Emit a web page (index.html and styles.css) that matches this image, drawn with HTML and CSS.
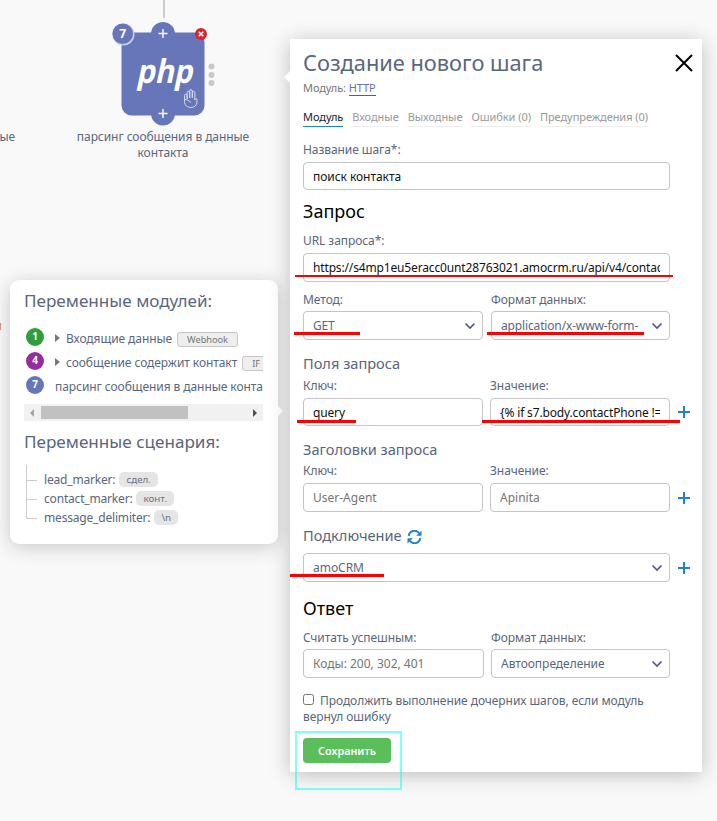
FILE: index.html
```html
<!DOCTYPE html>
<html lang="ru">
<head>
    <meta charset="UTF-8">
    <meta name="viewport" content="width=device-width, initial-scale=1.0">
    <title>Создание нового шага</title>
    <link rel="stylesheet" href="styles.css">
</head>
<body>
    <div class="canvas">
        <div class="connector"></div>
        <div class="edge-label edge-top">ые</div>
        <div class="edge-label edge-mid">и</div>

        <div class="node">
            <svg class="node-icon" width="120" height="110" viewBox="0 0 120 110">
                <g fill="#6775b9">
                    <rect x="19.5" y="12.5" width="83" height="83" rx="10"/>
                    <circle cx="61" cy="14" r="12"/>
                    <circle cx="61" cy="93.500" r="12"/>
                </g>
                <path d="M61 9v9M56.500 13.500h9M61 89v9M56.500 93.500h9" stroke="#fff" stroke-width="1.400"/>
                <circle cx="21.500" cy="14.500" r="11" fill="#c9cde5"/>
                <circle cx="20.700" cy="13.700" r="10.300" fill="#6775b9"/>
                <text class="node-num" x="20.700" y="18" text-anchor="middle">7</text>
                <text class="node-php" transform="translate(62 63) skewX(-12)" text-anchor="middle" textLength="56" lengthAdjust="spacingAndGlyphs">php</text>
                <circle cx="99" cy="14" r="6" fill="#d8232f"/>
                <path d="M96.700 11.700l4.600 4.600M101.300 11.700l-4.600 4.600" stroke="#fff" stroke-width="1.600"/>
                <g fill="#c9c9c9">
                    <circle cx="109.500" cy="46.500" r="3"/>
                    <circle cx="109.500" cy="55" r="3"/>
                    <circle cx="109.500" cy="63" r="3"/>
                </g>
                <path d="M82.500 80v-4.500a1.300 1.300 0 0 1 2.600 0V79v-6.500a1.300 1.300 0 0 1 2.600 0V78v-7a1.300 1.300 0 0 1 2.600 0v7-5.500a1.300 1.300 0 0 1 2.600 0V80c.5-1.500 1.600-2 2-1v3c0 3.500-2.500 5.500-5.800 5.500-3.600 0-6.600-2-6.600-6zM83 79.500c2 0 3.500 1 6 3" fill="none" stroke="#d5d9ee" stroke-width="1"/>
            </svg>
            <div class="node-title">парсинг сообщения в данные контакта</div>
        </div>

        <div class="vars">
            <h3>Переменные модулей:</h3>
            <div class="modules">
                <div class="module"><span class="num green">1</span><i class="tri"></i><span>Входящие данные</span><span class="tag">Webhook</span></div>
                <div class="module"><span class="num purple">4</span><i class="tri"></i><span>сообщение содержит контакт</span><span class="tag">IF</span></div>
                <div class="module"><span class="num blue">7</span><span>парсинг сообщения в данные конта</span></div>
            </div>
            <div class="scrollbar">
                <i class="arrow-left"></i>
                <div class="track"><div class="thumb"></div></div>
                <i class="arrow-right"></i>
            </div>
            <h3>Переменные сценария:</h3>
            <ul class="tree">
                <li>lead_marker: <span class="pill">сдел.</span></li>
                <li>contact_marker: <span class="pill">конт.</span></li>
                <li>message_delimiter: <span class="pill">\n</span></li>
            </ul>
        </div>

        <div class="modal">
            <div class="modal-head">
                <h2>Создание нового шага</h2>
                <svg class="close" width="18" height="18" viewBox="0 0 18 18"><path d="M1 1l16 16M17 1L1 17" stroke="#000" stroke-width="2"/></svg>
            </div>
            <div class="module-type">Модуль: <a>HTTP</a></div>
            <div class="tabs">
                <a class="active">Модуль</a>
                <a>Входные</a>
                <a>Выходные</a>
                <a>Ошибки (0)</a>
                <a>Предупреждения (0)</a>
            </div>

            <div class="group name-group">
                <label>Название шага*:</label>
                <input class="low" type="text" value="поиск контакта">
            </div>

            <h4>Запрос</h4>
            <div class="group url-group">
                <label>URL запроса*:</label>
                <input type="text" value="https://s4mp1eu5eracc0unt28763021.amocrm.ru/api/v4/contacts">
            </div>
            <div class="row method-row">
                <div class="group">
                    <label>Метод:</label>
                    <div class="select"><span>GET</span><svg width="12" height="8" viewBox="0 0 12 8"><path d="M1.500 1.500L6 6l4.500-4.500"/></svg></div>
                </div>
                <div class="group">
                    <label>Формат данных:</label>
                    <div class="select"><span>application/x-www-form-</span><svg width="12" height="8" viewBox="0 0 12 8"><path d="M1.500 1.500L6 6l4.500-4.500"/></svg></div>
                </div>
            </div>

            <h5>Поля запроса</h5>
            <div class="row pair-row fields-row">
                <div class="group">
                    <label>Ключ:</label>
                    <input class="low" type="text" value="query">
                </div>
                <div class="group">
                    <label>Значение:</label>
                    <input class="low" type="text" value="{% if s7.body.contactPhone != ''">
                </div>
                <svg class="plus" width="12" height="12" viewBox="0 0 12 12"><path d="M6 0v12M0 6h12"/></svg>
            </div>

            <h5>Заголовки запроса</h5>
            <div class="row pair-row">
                <div class="group">
                    <label>Ключ:</label>
                    <input type="text" placeholder="User-Agent">
                </div>
                <div class="group">
                    <label>Значение:</label>
                    <input type="text" placeholder="Apinita">
                </div>
                <svg class="plus" width="12" height="12" viewBox="0 0 12 12"><path d="M6 0v12M0 6h12"/></svg>
            </div>

            <h5>Подключение
                <svg class="refresh" width="15" height="14" viewBox="0 0 15 14">
                    <path d="M1.800 5.800A5.600 5.600 0 0 1 12 3.300M13.200 8.200A5.600 5.600 0 0 1 3 10.700" fill="none" stroke="#1c84cf" stroke-width="2"/>
                    <path d="M14.500.5v5.300H9.200zM.5 13.500V8.200h5.300z" fill="#1c84cf"/>
                </svg>
            </h5>
            <div class="row connect-row">
                <div class="select"><span>amoCRM</span><svg width="12" height="8" viewBox="0 0 12 8"><path d="M1.500 1.500L6 6l4.500-4.500"/></svg></div>
                <svg class="plus" width="12" height="12" viewBox="0 0 12 12"><path d="M6 0v12M0 6h12"/></svg>
            </div>

            <h4>Ответ</h4>
            <div class="row answer-row">
                <div class="group">
                    <label>Считать успешным:</label>
                    <input type="text" placeholder="Коды: 200, 302, 401">
                </div>
                <div class="group">
                    <label>Формат данных:</label>
                    <div class="select"><span>Автоопределение</span><svg width="12" height="8" viewBox="0 0 12 8"><path d="M1.500 1.500L6 6l4.500-4.500"/></svg></div>
                </div>
            </div>
            <label class="check"><input type="checkbox">Продолжить выполнение дочерних шагов, если модуль вернул ошибку</label>
            <button class="save">Сохранить</button>
        </div>

        <!-- пометки поверх формы -->
        <div class="mark mark-url"></div>
        <div class="mark mark-method"></div>
        <div class="mark mark-format"></div>
        <div class="mark mark-key"></div>
        <div class="mark mark-value"></div>
        <div class="mark mark-connect"></div>
        <div class="frame"></div>
    </div>
</body>
</html>
```
FILE: styles.css
```css
* { box-sizing: border-box; }
body { margin: 0; background: #f9f9f9; font-family: "Noto Sans", "Open Sans", sans-serif; font-size: 12px; line-height: 16px; letter-spacing: -0.07px; color: #596680; }
h2, h3, h4, h5, ul { margin: 0; padding: 0; font-weight: normal; letter-spacing: 0; }
.canvas { position: relative; width: 717px; height: 821px; overflow: hidden; }

/* схема */
.connector { position: absolute; left: 163px; top: 0; width: 2px; height: 18px; background: #ccc; }
.edge-label { position: absolute; right: 702px; white-space: nowrap; }
.edge-top { top: 129px; }
.edge-mid { top: 318px; right: 715px; color: #c98b55; }
.node { position: absolute; left: 63px; top: 20px; width: 200px; text-align: center; }
.node-icon { display: block; margin: 0 auto 0 39px; }
.node-num { font-size: 12px; font-weight: bold; fill: #fff; }
.node-php { font-family: "Open Sans", sans-serif; font-size: 33px; font-weight: bold; fill: #fff; }
.node-title { width: 190px; margin: -1px auto 0; }

/* переменные */
.vars { position: absolute; left: 10px; top: 280px; width: 268px; height: 264px; padding: 9px 15px 0 14px; background: #fff; border-radius: 9px; box-shadow: 0 3px 20px rgba(0,0,0,0.2); }
.vars::after { content: ""; position: absolute; left: 268px; top: 126px; border: 5px solid transparent; border-left-color: #fff; border-right: 0; }
.vars h3 { font-size: 17.1px; line-height: 24px; }
.modules { height: 91px; padding-top: 14px; overflow: hidden; }
.module { display: flex; height: 24px; align-items: flex-start; line-height: 24px; white-space: nowrap; }
.num { flex: none; width: 18px; height: 18px; margin: 1px 11px 0 2px; border-radius: 50%; color: #fff; font-size: 10px; font-weight: bold; line-height: 16px; text-align: center; }
.green { background: #2e9e3f; }
.purple { background: #952d9e; }
.blue { background: #6775b9; }
.tri { flex: none; margin: 7px 6px 0 0; border: 4px solid transparent; border-left: 5px solid #777; border-right: 0; }
.tag { flex: none; height: 15px; margin: 5px 0 0 5px; padding: 0 9px; border: 1px solid #c5c5c5; border-radius: 3px; background: #eee; color: #777; font-size: 9.3px; line-height: 13px; }
.scrollbar { display: flex; align-items: center; height: 17px; margin-bottom: 9px; padding: 0 6px; background: #f1f1f1; }
.track { flex: 1; padding: 0 0 0 7px; }
.thumb { width: 147px; height: 13px; background: #c1c1c1; }
.arrow-left, .arrow-right { border: 4px solid transparent; }
.arrow-left { border-left: 0; border-right-color: #a3a3a3; }
.arrow-right { border-right: 0; border-left-color: #505050; }
.tree { width: 200px; margin: 11px 0 0 2px; padding-top: 5px; list-style: none; letter-spacing: -0.18px; }
.tree li { position: relative; display: flex; height: 19px; padding-left: 18px; line-height: 19px; }
.tree li::before { content: ""; position: absolute; left: 0; top: -9px; width: 10px; height: 19px; border: solid #ccc; border-width: 0 0 1px 1px; }
.tree li:first-child::before { top: -5px; height: 15px; }
.pill { height: 15px; margin: 2px 0 0 4px; padding: 0 7px; border-radius: 5px; background: #e5e5e5; color: #6c7280; font-size: 9.8px; line-height: 16px; letter-spacing: 0; }

/* окно шага */
.modal { position: absolute; left: 290px; top: 39px; width: 412px; height: 733px; padding: 9px 0 0 13px; background: #fff; box-shadow: 0 3px 20px rgba(0,0,0,0.24); }
.modal::before { content: ""; position: absolute; left: -6px; top: 32px; border: 6px solid transparent; border-right-color: #fff; border-left: 0; }
.modal-head { display: flex; justify-content: space-between; padding-right: 9px; }
.modal h2 { font-size: 21.8px; line-height: 30px; }
.close { margin-top: 6px; }
.module-type { height: 19px; margin-top: 2px; font-size: 11px; color: #777; }
.module-type a { display: inline-block; line-height: 15px; border-bottom: 1px solid #3565ae; color: #6670b9; }
.tabs { display: flex; gap: 9px; margin-top: 10px; font-size: 11px; letter-spacing: -0.05px; color: #999; }
.tabs a { height: 18px; border-bottom: 1px solid #eee; white-space: nowrap; }
.tabs .active { border-bottom-color: #1c84cf; color: #223; }
.group { display: flex; flex-direction: column; gap: 4px; }
.name-group { width: 367px; margin-top: 15px; }
.modal h4 { margin-top: 9px; font-size: 18px; line-height: 24px; color: #000; }
.url-group { width: 367px; margin-top: 10px; }
input[type=text], .select { width: 100%; height: 29px; padding: 0 9px; border: 1px solid #c4c4c4; border-radius: 4px; background: #fff; font: 12px "Noto Sans", "Open Sans", sans-serif; letter-spacing: -0.15px; color: #111; }
input[type=text].low { height: 28px; padding-top: 1px; }
.name-group input[type=text] { letter-spacing: -0.05px; }
input::placeholder { color: #757575; letter-spacing: 0; }
.select { display: flex; align-items: center; justify-content: space-between; padding-right: 6px; color: #596680; }
.select span { overflow: hidden; width: 140px; white-space: nowrap; }
.answer-row .select, .connect-row .select { letter-spacing: -0.03px; }
.select svg { flex: none; fill: none; stroke: #4c5873; stroke-width: 1.6; }
.row { display: grid; align-items: end; }
.method-row { grid-template-columns: 180px 179px; gap: 8px; margin-top: 10px; }
.method-row .group { gap: 3px; }
.pair-row { grid-template-columns: 180px 180px 12px; gap: 7px; margin-top: 4px; }
.fields-row { margin-top: 5px; }
.modal h5 { display: flex; align-items: center; margin-top: 14px; font-size: 14.6px; line-height: 20px; }
.method-row + h5 { margin-top: 13px; }
.modal .pair-row + h5 { margin-top: 13px; }
.refresh { margin: 3px 0 0 5px; }
.plus { margin: 0 0 8px 1px; stroke: #1c84cf; stroke-width: 2; }
.connect-row { grid-template-columns: 367px 12px; gap: 7px; margin-top: 8px; }
.modal .connect-row + h4 { margin-top: 14px; }
.answer-row { grid-template-columns: 181px 179px; gap: 7px; margin-top: 10px; }
.answer-row .group { gap: 3px; }
.check { display: block; width: 367px; margin-top: 15px; }
.check input { width: 11px; height: 11px; margin: 0 6px 0 0; vertical-align: 0; }
.save { display: block; width: 88px; height: 25px; margin-top: 13px; padding: 0; border: 0; border-radius: 4px; background: #5abf5a; color: #fff; font: 600 10.8px "Noto Sans", "Open Sans", sans-serif; }

/* пометки */
.mark { position: absolute; height: 3px; background: #f00; }
.mark-url { left: 295px; top: 275px; width: 378px; height: 2px; }
.mark-method { left: 294px; top: 332px; width: 66px; }
.mark-format { left: 487px; top: 332px; width: 157px; }
.mark-key { left: 297px; top: 420px; width: 59px; }
.mark-value { left: 482px; top: 420px; width: 198px; }
.mark-connect { left: 290px; top: 574px; width: 94px; }
.frame { position: absolute; left: 295px; top: 731px; width: 107px; height: 59px; border: 2px solid rgba(0,255,255,0.5); }
```
